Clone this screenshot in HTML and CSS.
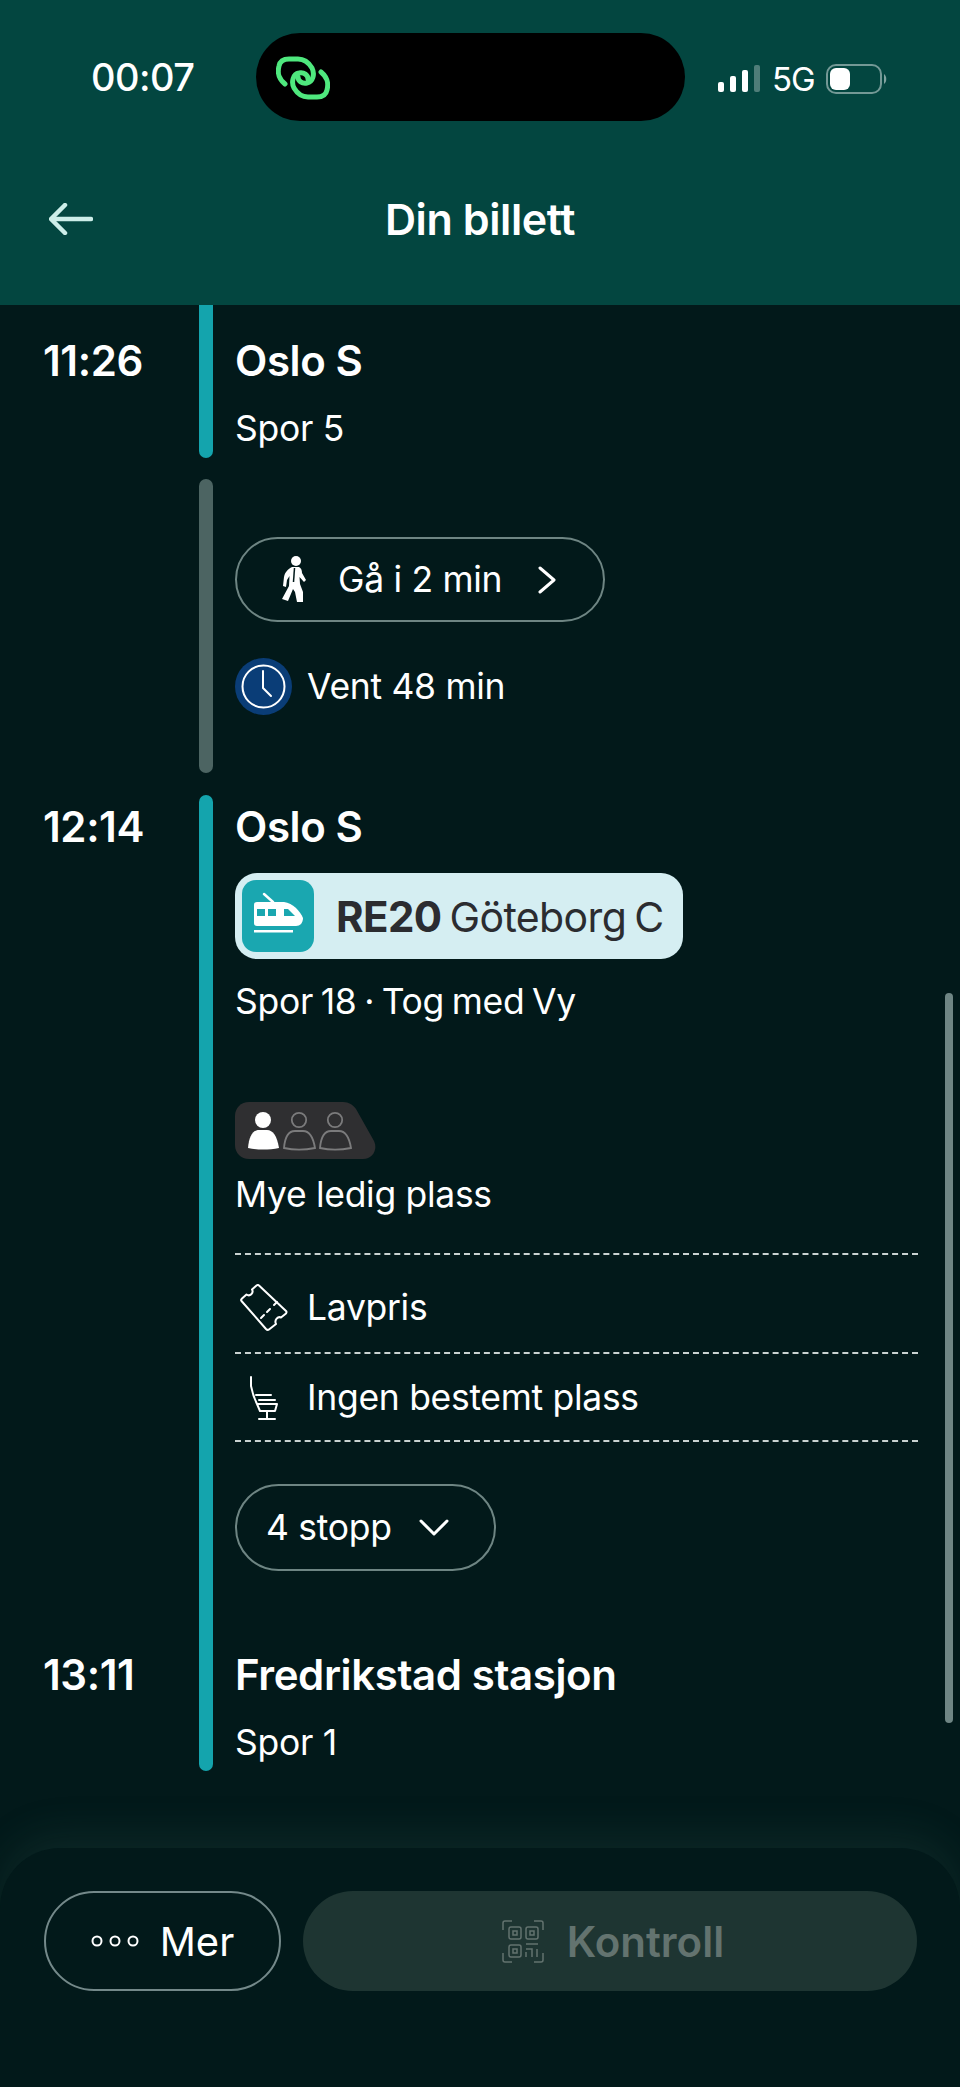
FILE: index.html
```html
<!DOCTYPE html>
<html lang="no">
<head>
<meta charset="utf-8">
<title>Din billett</title>
<link rel="stylesheet" href="styles.css">
</head>
<body>
<div class="page">
  <header class="header">
    <div class="status">
      <span class="clock-time">00:07</span>
      <div class="island">
        <svg class="island-logo" viewBox="0 0 54 44" fill="none" stroke="#4fe87e" stroke-width="5" stroke-linecap="round" stroke-linejoin="round">
          <path d="M9 28 C3 23 1 18 3 10 C4 5 8 3 13 3 L22 3 C28 3 33 7 36 12 C39 18 37 26 31 27 C26 28 22 25 22 21"/>
          <path d="M45 16 C51 21 53 26 51 34 C50 39 46 41 41 41 L32 41 C26 41 21 37 18 32 C15 26 17 18 23 17 C28 16 32 19 32 23"/>
        </svg>
      </div>
      <div class="status-right">
        <svg class="signal" viewBox="0 0 42 27"><rect x="0" y="17" width="6" height="10" rx="2" fill="#fff"/><rect x="12" y="11" width="6" height="16" rx="2" fill="#fff"/><rect x="24" y="5" width="6" height="22" rx="2" fill="#fff"/><rect x="36" y="0" width="6" height="27" rx="2" fill="#fff" opacity=".3"/></svg>
        <span class="net">5G</span>
        <svg class="battery" viewBox="0 0 62 30"><rect x="1" y="1" width="54" height="28" rx="9" fill="none" stroke="#fff" stroke-opacity=".45" stroke-width="2"/><rect x="4" y="4" width="20" height="22" rx="6" fill="#fff"/><path d="M58 10 C61 12 61 18 58 20 Z" fill="#fff" fill-opacity=".5"/></svg>
      </div>
    </div>
    <div class="titlebar">
      <svg class="back" viewBox="0 0 44 32" fill="none" stroke="#cdeee9" stroke-width="4.500" stroke-linecap="round" stroke-linejoin="round"><path d="M16 2 L2 16 L16 30"/><path d="M3 16 H42"/></svg>
      <h1 class="title">Din billett</h1>
    </div>
  </header>

  <main class="main">
    <section class="seg seg-first">
      <span class="time">11:26</span>
      <div class="bar bar-teal bar-open"></div>
      <div class="col col-first">
        <div class="stop">Oslo S</div>
        <div class="text text-spor5">Spor 5</div>
      </div>
    </section>

    <section class="seg seg-walk">
      <span class="time"></span>
      <div class="bar bar-grey"></div>
      <div class="col col-walk">
        <div class="pill pill-walk">
          <svg class="walk" viewBox="0 0 24 47" fill="#fff"><circle cx="14" cy="5" r="5"/><path d="M10 11 L17 11 C19 12 20 14 20 17 L24 24 L22 26 L17.500 21 L18 28 L21 36 L21 46 L15 46 L13 36 L11 33 L6 45 L0 43 L7 30 L7.500 20 L5 24 L4 31 L1 30 L2 21 C3 16 6 13 10 11 Z"/><path d="M12.500 12 L11.500 26" stroke="#02191a" stroke-width="1.500"/></svg>
          <span>Gå i 2 min</span>
          <svg class="chev" viewBox="0 0 18 28" fill="none" stroke="#fff" stroke-width="3" stroke-linecap="round" stroke-linejoin="round"><path d="M2 2 L16 14 L2 26"/></svg>
        </div>
        <div class="row-icon wait">
          <svg class="wait-icon" viewBox="0 0 57 57"><circle cx="28.500" cy="28.500" r="28.500" fill="#0a3d77"/><circle cx="28.500" cy="28.500" r="21" fill="none" stroke="#fff" stroke-width="2"/><path d="M28 13 V30 L36 38" fill="none" stroke="#fff" stroke-width="2" stroke-linecap="round" stroke-linejoin="round"/></svg>
          <span class="text">Vent 48 min</span>
        </div>
      </div>
    </section>

    <section class="seg seg-train">
      <span class="time time-top">12:14</span>
      <div class="bar bar-teal bar-span"></div>
      <div class="col col-train">
        <div class="stop">Oslo S</div>
        <div class="line">
          <span class="line-icon">
            <svg viewBox="0 0 71 71" class="train" fill="#fff"><path d="M22 14 L31 22" stroke="#fff" stroke-width="2.500" stroke-linecap="round"/><path d="M15 22 H42 C51 23 58 31 61 38 C61 43 58 46 54 46 H15 C13 46 12 45 12 43 V25 C12 23 13 22 15 22 Z"/><rect x="15" y="29" width="8" height="7" fill="#1aa7b0"/><rect x="26" y="29" width="8" height="7" fill="#1aa7b0"/><path d="M42 29 H46 L53 36 H42 Z" fill="#1aa7b0"/><rect x="12" y="50" width="39" height="2.500"/></svg>
          </span>
          <span class="line-text"><b>RE20</b> Göteborg C</span>
        </div>
        <div class="text text-track">Spor 18 · Tog med Vy</div>
        <svg class="load" viewBox="0 0 141 57">
          <path d="M14 0 H108 C114 0 118 3 121 7 L139 39 C143 47 138 57 128 57 H14 C6 57 0 51 0 43 V14 C0 6 6 0 14 0 Z" fill="#2f2f31"/>
          <circle cx="28" cy="18" r="8" fill="#fff"/><path d="M13 46 C14 34 18 28 24 28 H32 C38 28 42 34 44 46 C34 48 22 48 13 46 Z" fill="#fff"/>
          <g fill="none" stroke="#7b7b7c" stroke-width="1.800"><circle cx="64" cy="18" r="7.200"/><path d="M49 46 C50 34 54 29 60 29 H68 C74 29 78 34 80 46 C70 48 58 48 49 46 Z"/><circle cx="100" cy="18" r="7.200"/><path d="M85 46 C86 34 90 29 96 29 H104 C110 29 114 34 116 46 C106 48 94 48 85 46 Z"/></g>
        </svg>
        <div class="text text-load">Mye ledig plass</div>
        <div class="info info-price">
          <span class="info-glyph">
            <svg class="ticket" viewBox="0 0 48 48" fill="none" stroke="#fff" stroke-width="2" stroke-linejoin="round" stroke-linecap="round"><path d="M19 1.500 L46 27 Q47 28 46 29.500 L41 33.500 C38 32 34 36 36 40 L29 45.500 Q27.500 46.500 26 45 L1.500 17 Q0.500 16 2 14.500 L6.500 10.500 C10 13 14 9 12 5.500 L16.500 1.500 Q18 0.500 19 1.500 Z"/><path d="M37 18 L34 21 M30 25 L27 28 M24 31 L21 34"/></svg>
          </span>
          <span class="text">Lavpris</span>
        </div>
        <div class="info info-seat">
          <span class="info-glyph">
            <svg class="seat" viewBox="0 0 30 44" fill="none" stroke="#fff" stroke-width="2" stroke-linecap="round" stroke-linejoin="round"><path d="M2 1 V10 C3 15 5 22 8 28 H28 L26 35 H11 L8 28"/><path d="M7 19 H22 M10 24 H26 M18 35 V42 M10 43 H26"/></svg>
          </span>
          <span class="text">Ingen bestemt plass</span>
        </div>
        <div class="rule"></div>
        <div class="pill pill-stops">
          <span>4 stopp</span>
          <svg class="chev-down" viewBox="0 0 30 18" fill="none" stroke="#fff" stroke-width="3" stroke-linecap="round" stroke-linejoin="round"><path d="M2 2 L15 15 L28 2"/></svg>
        </div>
      </div>
      <span class="time time-bottom">13:11</span>
      <div class="col col-end">
        <div class="stop">Fredrikstad stasjon</div>
        <div class="text text-spor1">Spor 1</div>
      </div>
    </section>

    <div class="scrollbar"></div>
  </main>

  <footer class="footer">
    <button class="btn btn-more">
      <svg class="dots" viewBox="0 0 48 14" fill="none" stroke="#fff" stroke-width="2"><circle cx="6" cy="7" r="4.500"/><circle cx="24" cy="7" r="4.500"/><circle cx="42" cy="7" r="4.500"/></svg>
      <span>Mer</span>
    </button>
    <button class="btn btn-control">
      <svg class="qr" viewBox="0 0 42 43" fill="none" stroke="#63736f" stroke-width="1.500">
        <path d="M1 10 V3 C1 2 2 1 3 1 H10 M32 1 H39 C40 1 41 2 41 3 V10 M1 33 V40 C1 41 2 42 3 42 H10 M32 42 H39 C40 42 41 41 41 40 V33"/>
        <rect x="7" y="7" width="12" height="12" rx="2"/><rect x="11" y="11" width="4" height="4"/>
        <rect x="24" y="7" width="12" height="12" rx="2"/><rect x="28" y="11" width="4" height="4"/>
        <rect x="7" y="25" width="12" height="12" rx="2"/><rect x="11" y="29" width="4" height="4"/>
        <path d="M24 24 H36 M24 29 H30 V37 M35 29 V37 M24 37 V32"/>
      </svg>
      <span>Kontroll</span>
    </button>
  </footer>
</div>
</body>
</html>
```

FILE: styles.css
```css
* { box-sizing: border-box; }
html, body { margin: 0; padding: 0; }
body {
  background: #02191a;
  color: #fff;
  font-family: Inter, "Liberation Sans", sans-serif;
}
.page {
  width: 960px;
  height: 2087px;
  display: flex;
  flex-direction: column;
  overflow: hidden;
}

/* Header */
.header {
  height: 305px;
  flex: none;
  background: #034640;
  padding-top: 33px;
}
.status {
  display: flex;
  align-items: center;
  height: 88px;
  padding-left: 91px;
}
.clock-time {
  width: 165px;
  font-size: 38px;
  font-weight: 500;
  letter-spacing: -0.5px;
  flex: none;
}
.island {
  width: 429px;
  height: 88px;
  flex: none;
  background: #000;
  border-radius: 44px;
  display: flex;
  align-items: center;
  padding-left: 20px;
}
.island-logo { width: 54px; height: 44px; margin-top: 2px; }
.status-right {
  display: flex;
  align-items: center;
  margin-left: 33px;
  margin-top: 3px;
}
.signal { width: 42px; height: 27px; }
.net { margin-left: 12px; font-size: 33px; font-weight: 400; width: 54px; letter-spacing: -1px; }
.battery { width: 62px; height: 30px; }
.titlebar {
  display: grid;
  grid-template-columns: 1fr auto 1fr;
  align-items: center;
  margin-top: 76px;
  padding-left: 49px;
  padding-right: 49px;
}
.back { width: 44px; height: 32px; }
.title {
  margin: 0;
  font-size: 43px;
  line-height: 44px;
  font-weight: 600;
  letter-spacing: -0.4px;
}

/* Timeline */
.main {
  position: relative;
  flex: 1;
  padding-left: 43px;
}
.seg {
  display: grid;
  grid-template-columns: 156px 14px 1fr;
  column-gap: 0;
}
.seg-walk { margin-top: 21px; }
.seg-train { margin-top: 22px; }
.time {
  font-size: 42px;
  line-height: 44px;
  font-weight: 600;
  letter-spacing: -0.4px;
  padding-top: 34px;
}
.time-top { padding-top: 10px; grid-row: 1; }
.time-bottom { padding-top: 82px; grid-row: 2; grid-column: 1; }
.bar { width: 14px; border-radius: 7px; }
.bar-teal { background: #14a4ad; }
.bar-grey { background: #4c6462; }
.bar-open { border-radius: 0 0 7px 7px; }
.bar-span { grid-row: 1 / span 2; grid-column: 2; }
.col { padding-left: 22px; width: 705px; }
.col-first { height: 153px; padding-top: 34px; }
.col-walk { height: 294px; padding-top: 58px; }
.col-train { padding-top: 10px; grid-column: 3; }
.col-end { grid-column: 3; grid-row: 2; padding-top: 82px; padding-bottom: 6px; }
.stop {
  font-size: 42px;
  line-height: 44px;
  font-weight: 600;
  letter-spacing: -0.4px;
  white-space: nowrap;
}
.text {
  font-size: 35.500px;
  line-height: 44px;
  font-weight: 400;
  letter-spacing: -0.3px;
}
.text-spor5 { margin-top: 24px; }
.text-spor1 { margin-top: 24px; }
.text-track { margin-top: 21px; word-spacing: -2px; }
.text-load { margin-top: 14px; }

.pill {
  display: flex;
  align-items: center;
  border: 2px solid #6e8583;
  border-radius: 44px;
  font-size: 35.500px;
  letter-spacing: -0.3px;
}
.pill-walk { width: 370px; height: 85px; padding-left: 45px; }
.pill-walk span { margin-left: 32px; width: 200px; }
.walk { width: 24px; height: 47px; }
.chev { width: 18px; height: 28px; }
.pill-stops { width: 261px; height: 87px; margin-top: 42px; padding-left: 29px; }
.chev-down { width: 30px; height: 18px; margin-left: 27px; }

.row-icon { display: flex; align-items: center; }
.wait { margin-top: 36px; }
.wait-icon { width: 57px; height: 57px; margin-right: 15px; }

.line {
  width: 448px;
  height: 86px;
  margin-top: 24px;
  background: #d5eef2;
  border-radius: 22px;
  display: flex;
  align-items: center;
  padding-left: 7px;
  color: #2b2c30;
}
.line-icon {
  width: 72px;
  height: 72px;
  background: #1aa7b0;
  border-radius: 14px;
  display: block;
}
.train { width: 71px; height: 71px; display: block; }
.line-text {
  margin-left: 22px;
  font-size: 41px;
  font-weight: 400;
  letter-spacing: -0.6px;
  word-spacing: -3px;
  white-space: nowrap;
}
.line-text b { font-weight: 700; font-size: 42px; }

.load { display: block; width: 141px; height: 57px; margin-top: 78px; }

.info {
  display: flex;
  align-items: center;
  width: 683px;
  border-top: 2px dashed #c9d2d1;
}
.info-price { margin-top: 36px; height: 99px; padding-top: 9px; }
.info-seat { height: 88px; padding-top: 2px; }
.info-glyph {
  width: 72px;
  display: flex;
  justify-content: flex-start;
  flex: none;
}
.ticket { width: 48px; height: 48px; margin-left: 5px; }
.seat { width: 30px; height: 44px; margin-left: 14px; }
.rule { width: 683px; border-top: 2px dashed #c9d2d1; }

.scrollbar {
  position: absolute;
  top: 688px;
  right: 7px;
  width: 8px;
  height: 730px;
  border-radius: 4px;
  background: #6f8584;
}

/* Footer */
.footer {
  flex: none;
  height: 239px;
  background: #02191a;
  border-radius: 60px 60px 0 0;
  box-shadow: 0 -14px 40px rgba(70, 110, 100, 0.16);
  padding: 43px 43px 0 44px;
  display: flex;
  align-items: flex-start;
  gap: 22px;
  position: relative;
}
.btn {
  height: 100px;
  border-radius: 50px;
  display: flex;
  align-items: center;
  justify-content: center;
  font-family: inherit;
  color: #fff;
  background: none;
  padding: 0;
}
.btn-more {
  width: 237px;
  flex: none;
  border: 2px solid #74898a;
  font-size: 40px;
  font-weight: 400;
  gap: 21px;
}
.dots { width: 48px; height: 14px; }
.btn-control {
  flex: 1;
  border: 0;
  background: #1e3532;
  color: #63736f;
  font-size: 42px;
  font-weight: 600;
  gap: 23px;
  padding-left: 6px;
}
.qr { width: 42px; height: 43px; }
```
